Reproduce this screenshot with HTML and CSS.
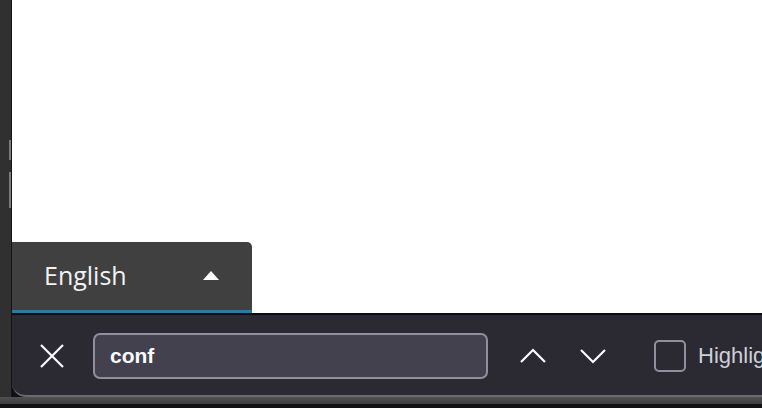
FILE: index.html
```html
<!DOCTYPE html>
<html lang="en">
  <head>
    <meta charset="UTF-8" />
    <meta name="viewport" content="width=device-width, initial-scale=1.0" />
    <title>Find in page</title>
    <link rel="stylesheet" href="styles.css">
  </head>
  <body>
    <div class="screen">
      <div class="top">
        <!-- window edge on the left -->
        <div class="edge">
          <span class="mark mark-a"></span>
          <span class="mark mark-b"></span>
        </div>

        <div class="window">
          <div class="page">
            <!-- Language picker -->
            <div class="lang">
              <span class="lang-name">English</span>
              <span class="lang-arrow"></span>
            </div>
          </div>

          <!-- Find bar -->
          <div class="findbar">
            <button class="close" aria-label="Close">
              <svg width="26" height="26" viewBox="0 0 26 26">
                <path d="M2 2 L24 24 M24 2 L2 24" stroke="#fbfbfe" stroke-width="2.2" fill="none" />
              </svg>
            </button>
            <div class="search">conf</div>
            <button class="nav" aria-label="Previous">
              <svg width="28" height="16" viewBox="0 0 28 16">
                <path d="M2 14 L14 2 L26 14" stroke="#fbfbfe" stroke-width="2.2" fill="none" />
              </svg>
            </button>
            <button class="nav" aria-label="Next">
              <svg width="28" height="16" viewBox="0 0 28 16">
                <path d="M2 2 L14 14 L26 2" stroke="#fbfbfe" stroke-width="2.2" fill="none" />
              </svg>
            </button>
            <label class="check">
              <span class="box"></span>
              <span class="check-label">Highlight All</span>
            </label>
          </div>
        </div>
      </div>
      <div class="dock"></div>
    </div>
  </body>
</html>
```

FILE: styles.css
```css
html,
body {
  margin: 0;
  height: 100%;
}
body {
  background: #111114;
  overflow: hidden;
  font-family: "Liberation Sans", Arial, sans-serif;
}
.screen {
  display: flex;
  flex-direction: column;
  width: 762px;
  height: 408px;
}
.top {
  display: flex;
  height: 397px;
}
.edge {
  position: relative;
  width: 11px;
  background: #303030;
  border-right: 1px solid #141414;
}
.mark {
  position: absolute;
  right: 0;
  width: 2px;
  background: #c8c8c8;
  opacity: 0.5;
}
.mark-a {
  top: 140px;
  height: 20px;
}
.mark-b {
  top: 172px;
  height: 36px;
}
.window {
  flex: 1;
  display: flex;
  flex-direction: column;
  min-width: 0;
}
.page {
  height: 313px;
  background: #ffffff;
  display: flex;
  align-items: flex-end;
}
.lang {
  width: 175px;
  height: 68px;
  background: #404040;
  border-bottom: 3px solid #1b7fb0;
  border-top-right-radius: 5px;
  display: flex;
  align-items: center;
  justify-content: space-between;
  padding: 0 33px 0 32px;
}
.lang-name {
  font-family: "Open Sans", sans-serif;
  font-size: 25px;
  color: #f2f2f2;
  padding-bottom: 2px;
}
.lang-arrow {
  width: 0;
  height: 0;
  border-left: 8px solid transparent;
  border-right: 8px solid transparent;
  border-bottom: 9px solid #ffffff;
  margin-bottom: 2px;
}
.findbar {
  flex: 1;
  display: flex;
  align-items: center;
  padding-top: 2px;
  background: #2b2a33;
  border-top: 2px solid #0d0d10;
  border-bottom: 2px solid #6a6a70;
  border-bottom-left-radius: 14px;
  overflow: hidden;
  white-space: nowrap;
}
.close,
.nav {
  background: none;
  border: none;
  padding: 0;
  display: flex;
  align-items: center;
  justify-content: center;
}
.close {
  margin-left: 27px;
  width: 26px;
  height: 26px;
}
.search {
  margin-left: 28px;
  width: 376px;
  height: 42px;
  flex-shrink: 0;
  border: 2px solid #8f8f9d;
  border-radius: 7px;
  background: #42414d;
  color: #fbfbfe;
  font-size: 21px;
  font-weight: bold;
  line-height: 42px;
  padding-left: 15px;
}
.nav {
  width: 28px;
  height: 16px;
  margin-left: 31px;
}
.nav + .nav {
  margin-left: 32px;
}
.check {
  display: flex;
  align-items: center;
  margin-left: 47px;
  flex-shrink: 0;
}
.box {
  width: 28px;
  height: 28px;
  border: 2px solid #8f8f9d;
  border-radius: 5px;
}
.check-label {
  margin-left: 12px;
  font-size: 22px;
  color: #cfcfd8;
}
.dock {
  height: 7px;
  background: linear-gradient(#505050, #3e3e3e);
}
```
